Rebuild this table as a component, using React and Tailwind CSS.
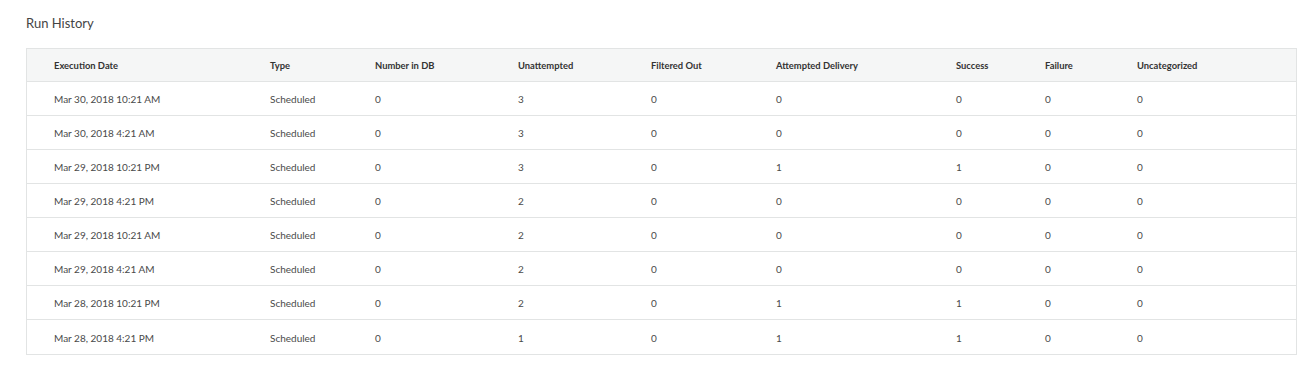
const columns = [
  'Execution Date',
  'Type',
  'Number in DB',
  'Unattempted',
  'Filtered Out',
  'Attempted Delivery',
  'Success',
  'Failure',
  'Uncategorized',
];

const runs = [
  ['Mar 30, 2018 10:21 AM', 'Scheduled', 0, 3, 0, 0, 0, 0, 0],
  ['Mar 30, 2018 4:21 AM', 'Scheduled', 0, 3, 0, 0, 0, 0, 0],
  ['Mar 29, 2018 10:21 PM', 'Scheduled', 0, 3, 0, 1, 1, 0, 0],
  ['Mar 29, 2018 4:21 PM', 'Scheduled', 0, 2, 0, 0, 0, 0, 0],
  ['Mar 29, 2018 10:21 AM', 'Scheduled', 0, 2, 0, 0, 0, 0, 0],
  ['Mar 29, 2018 4:21 AM', 'Scheduled', 0, 2, 0, 0, 0, 0, 0],
  ['Mar 28, 2018 10:21 PM', 'Scheduled', 0, 2, 0, 1, 1, 0, 0],
  ['Mar 28, 2018 4:21 PM', 'Scheduled', 0, 1, 0, 1, 1, 0, 0],
];

const grid = 'grid grid-cols-[216px_105px_143px_133px_125px_180px_89px_92px_1fr] pl-[27px] items-center';

export default function App() {
  return (
    <div className="w-full min-h-[380px] bg-white px-[26px] pt-[15px] text-[#333] font-['Lato','Open_Sans',sans-serif]">
      {/* Title */}
      <h2 className="text-[13px] leading-4 text-[#444] mb-[17px]">Run History</h2>

      {/* Table */}
      <div className="w-[1271px] border border-[#e2e4e4]">
        <div className={`${grid} h-[33px] pt-[3px] bg-[#f5f6f6] border-b border-[#e2e4e4] text-[9.4px] font-bold text-[#333]`}>
          {columns.map((c) => (
            <div key={c}>{c}</div>
          ))}
        </div>
        {runs.map((row, i) => (
          <div
            key={i}
            className={`${grid} h-[34px] pt-[2px] text-[10px] text-[#4a4a4a] ${i < runs.length - 1 ? 'border-b border-[#e2e4e4]' : ''}`}
          >
            {row.map((cell, j) => (
              <div key={j}>{cell}</div>
            ))}
          </div>
        ))}
      </div>
    </div>
  );
}
